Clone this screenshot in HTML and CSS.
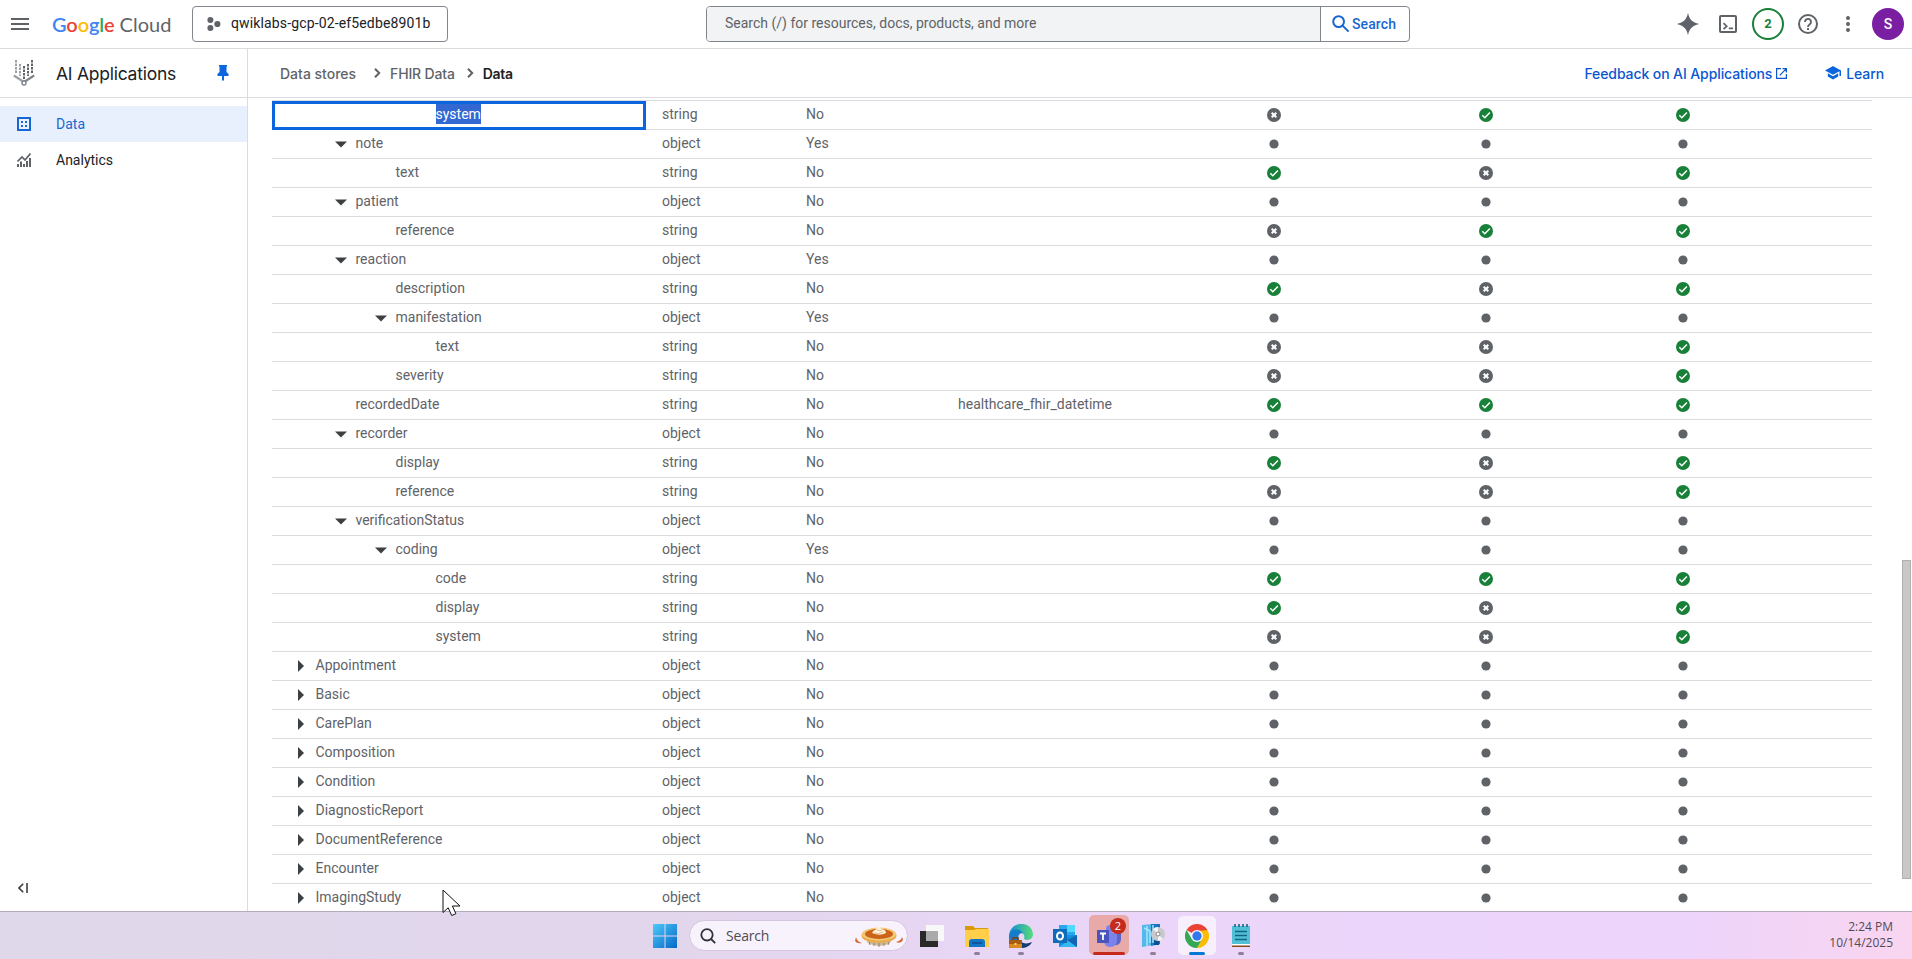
FILE: index.html
```html
<!DOCTYPE html>
<html lang="en">
<head>
<meta charset="utf-8">
<title>AI Applications – Data</title>
<link rel="stylesheet" href="styles.css">
</head>
<body>
<svg class="defs" width="0" height="0">
  <symbol id="yes" viewBox="0 0 14 14"><circle cx="7" cy="7" r="7" fill="#188038"/><path d="M3.3 7.2 5.8 9.7 10.9 4.5" fill="none" stroke="#fff" stroke-width="1.5"/></symbol>
  <symbol id="no" viewBox="0 0 14 14"><circle cx="7" cy="7" r="7" fill="#5f6368"/><path d="M4.7 4.7 9.3 9.3M9.3 4.7 4.7 9.3" fill="none" stroke="#fff" stroke-width="2"/></symbol>
  <symbol id="dot" viewBox="0 0 14 14"><circle cx="7" cy="7" r="4.6" fill="#5f6368"/></symbol>
  <symbol id="open" viewBox="0 0 12 12"><path d="M0 3.500h12L6 9.500z" fill="#3c4043"/></symbol>
  <symbol id="shut" viewBox="0 0 12 12"><path d="M3 0v12L9 6z" fill="#3c4043"/></symbol>
</svg>
<header class="topbar">
  <svg class="menu" width="18" height="12" viewBox="0 0 18 12"><path d="M0 1h18M0 6h18M0 11h18" stroke="#5f6368" stroke-width="2"/></svg>
  <div class="logo"><span class="google"><i class="b">G</i><i class="r">o</i><i class="y">o</i><i class="b">g</i><i class="g">l</i><i class="r">e</i></span><span class="cloud">Cloud</span></div>
  <div class="project">
    <svg width="14" height="14" viewBox="0 0 14 14" fill="#5f6368"><circle cx="3.4" cy="3" r="3"/><circle cx="3.4" cy="11" r="3"/><circle cx="10.4" cy="7" r="3.1"/></svg>
    <span>qwiklabs-gcp-02-ef5edbe8901b</span>
  </div>
  <div class="search">
    <span class="field">Search (/) for resources, docs, products, and more</span>
    <span class="go"><svg width="18" height="18" viewBox="0 0 18 18" fill="none" stroke="#1967d2" stroke-width="2"><circle cx="6.6" cy="6.6" r="5.4"/><path d="m10.6 10.6 6 6"/></svg>Search</span>
  </div>
  <div class="tools">
    <svg width="22" height="22" viewBox="0 0 22 22"><path d="M11 0C12.500 6.500 15.500 9.500 22 11C15.500 12.500 12.500 15.500 11 22C9.500 15.500 6.500 12.500 0 11C6.500 9.500 9.500 6.500 11 0z" fill="#5f6368"/></svg>
    <svg width="18" height="18" viewBox="0 0 18 18" fill="none" stroke="#5f6368" stroke-width="2"><rect x="1" y="1" width="16" height="16" rx="1"/><path d="M4.5 8.2 7.7 11.2 4.5 14.2M9.8 13.4H14" stroke-width="1.7"/></svg>
    <span class="count">2</span>
    <svg width="20" height="20" viewBox="0 0 20 20" fill="none" stroke="#5f6368" stroke-width="2"><circle cx="10" cy="10" r="9"/><path d="M7 8a3 3 0 1 1 4.8 2.3C10.6 11.2 10 11.700 10 13M10 14v2" stroke-width="1.9"/></svg>
    <svg width="4" height="16" viewBox="0 0 4 16" fill="#5f6368"><circle cx="2" cy="2" r="2"/><circle cx="2" cy="8" r="2"/><circle cx="2" cy="14" r="2"/></svg>
    <span class="avatar">S</span>
  </div>
</header>
<div class="body">
  <aside class="side">
    <div class="product">
      <svg width="22" height="26" viewBox="0 0 22 26" fill="none"><path d="M3 0v14M7 4v12" stroke="#9aa0a6" stroke-width="2" stroke-dasharray="2.5 1"/><path d="M11 6v13M15 4v12M19 0v14" stroke="#5f6368" stroke-width="2" stroke-dasharray="2.5 1"/><path d="M.8 15.500 11 22" stroke="#9aa0a6" stroke-width="2.2"/><path d="M21.200 15.500 11 22" stroke="#80868b" stroke-width="2.200"/><circle cx="11" cy="23" r="2" fill="#fff" stroke="#80868b" stroke-width="1.400"/></svg>
      <h1>AI Applications</h1>
      <svg class="pin" width="12" height="16" viewBox="0 0 12 16"><path d="M2 0h8v1.500H9.500V7L11.500 9v2H7v4l-1 1-1-1v-4H.5V9l2-2V1.500H2z" fill="#0b65dd"/></svg>
    </div>
    <nav>
      <a class="item on"><svg width="14" height="14" viewBox="0 0 14 14"><path d="M1 1h12v12H1z" fill="none" stroke="#1967d2" stroke-width="2"/><path d="M4 4h2v2H4zM8 4h2v2H8zM4 8h2v2H4zM8 8h2v2H8z" fill="#1967d2"/></svg><span>Data</span></a>
      <a class="item"><svg width="14" height="14" viewBox="0 0 14 14" fill="none" stroke="#5f6368"><path d="M1 14v-3M4 14V8.500M7 14v-3M10 14V8M13 14V5" stroke-width="2"/><path d="M.5 8.500 5 4l3 3 5.500-6.500" stroke-width="1.700"/></svg><span>Analytics</span></a>
    </nav>
    <svg class="fold" width="10" height="10" viewBox="0 0 10 10" fill="none" stroke="#3c4043" stroke-width="1.600"><path d="M5.200.8 1 5l4.200 4.200M9 0v10"/></svg>
  </aside>
  <main>
    <div class="crumbs">
      <span class="c1">Data stores</span>
      <svg width="7" height="10" viewBox="0 0 7 10"><path d="m1 .8 4.200 4.200L1 9.200" fill="none" stroke="#5f6368" stroke-width="2"/></svg>
      <span class="c2">FHIR Data</span>
      <svg width="7" height="10" viewBox="0 0 7 10"><path d="m1 .8 4.200 4.200L1 9.200" fill="none" stroke="#5f6368" stroke-width="2"/></svg>
      <b>Data</b>
      <a class="feedback"><span>Feedback on AI Applications</span><svg width="11" height="11" viewBox="0 0 11 11" fill="none" stroke="#0b57d0" stroke-width="1.200"><path d="M5 .6H.6v9.800h9.800V6M6.500.6h3.900v3.900M10.400.6 3.700 7.300"/></svg></a>
      <a class="learn"><svg width="16" height="14" viewBox="0 0 16 14" fill="#0b65dd"><path d="M8 0 0 4.400l8 4.400 6.500-3.600V10H16V4.400zM2.800 7.300v3.100L8 13.400l5.200-3V7.300L8 10.200z"/></svg><span>Learn</span></a>
    </div>
    <div class="grid" id="grid"></div>
    <div class="scroll"></div>
  </main>
</div>
<footer class="taskbar">
  <div class="apps">
    <svg class="win" width="24" height="24" viewBox="0 0 24 24"><defs><linearGradient id="w" x1="0" y1="0" x2="1" y2="1"><stop offset="0" stop-color="#4cc9fb"/><stop offset="1" stop-color="#0568c5"/></linearGradient></defs><path d="M0 0h11.500v11.500H0zM12.500 0H24v11.500H12.500zM0 12.500h11.500V24H0zM12.500 12.500H24V24H12.500z" fill="url(#w)"/></svg>
    <div class="find">
      <svg width="16" height="16" viewBox="0 0 16 16" fill="none" stroke="#30303a" stroke-width="1.800"><circle cx="7" cy="6.800" r="5.700"/><path d="m11 11 4.200 4.200"/></svg>
      <span>Search</span>
      <svg width="48" height="22" viewBox="0 0 48 22"><path d="M1 12q1 5 6 6-5 1-7-2zM47 12q-1 4-6 5 5 2 7-2z" fill="#d9662b"/><path d="M9 11h30l-4 7q-11 6-22 0z" fill="#c9b99a"/><path d="M14 17l1 3M19 18v3M24 18v4M29 18v3M34 17l-1 3" stroke="#8f8370"/><ellipse cx="24" cy="10.500" rx="17.500" ry="7.500" fill="#e9ad4e"/><ellipse cx="24" cy="9" rx="17" ry="6.500" fill="#f3c879"/><ellipse cx="24" cy="9" rx="14" ry="5" fill="#c96418"/><path d="M17 8q1-3 4-3.500Q22 1 24.500 0q-.5 3 2.500 4 4 1 4 4-6 3.500-14 0z" fill="#fff1d8"/><path d="M19 8q5 2 9-1M22 5q3 1 5 0" fill="none" stroke="#e2bd8c"/></svg>
    </div>
    <svg class="a task" width="24" height="22" viewBox="0 0 24 22"><path d="M0 6h18v16H0z" fill="#292929"/><path d="M6 0h18v16H6z" fill="#f8f8f8"/><path d="M6 6h12v10H6z" fill="#aaa"/></svg>
    <div class="app run"><svg width="24" height="24" viewBox="0 0 24 24"><path d="M0 2h8l2 2h13v6H0z" fill="#d99a0b"/><path d="M0 6h9l2-1h13v18H0z" fill="#ffcf4b"/><path d="M4 23v-5q0-3 3-3h10q3 0 3 3v5z" fill="#1475c7"/><path d="M7 19h10" stroke="#0b4f91" stroke-width="1.500"/></svg></div>
    <div class="app run"><svg width="24" height="24" viewBox="0 0 24 24"><defs><linearGradient id="e"><stop offset="0" stop-color="#158bd5"/><stop offset="1" stop-color="#58dc79"/></linearGradient></defs><path d="M0 13C0-4 23-4 24 10c0 6-6 7-9 5 2-6-4-7-6-4-2 4 1 10 7 9-3 4-16 5-16-7z" fill="url(#e)"/><path d="M0 13C1 5 9 3 14 9c-6-1-7 8 2 12-6 5-16 1-16-8z" fill="#147cc8"/><path d="M11 17c3 3 8 3 12 1-2 4-6 6-11 6z" fill="#123e75"/><path d="M0 16h13v8H0z" fill="#d88924"/><path d="M0 16h13v4H0z" fill="#a75b13"/><path d="M5.500 19h2v2h-2z" fill="#ffd36b"/><path d="M4 16v-2h5v2" fill="none" stroke="#7b400c" stroke-width="1.500"/></svg></div>
    <div class="app"><svg width="24" height="24" viewBox="0 0 24 24"><path d="M6 1h16v14H6z" fill="#28a8ea"/><path d="M14 1h8v7h-8z" fill="#50d9ff"/><path d="M6 11 24 11v12H6z" fill="#1490df"/><path d="m6 23 18-12v12z" fill="#35b8f1"/><path d="M14 16 24 23V11z" fill="#1266b4"/><path d="M0 5h14v14H0z" fill="#0f6cbd"/><ellipse cx="7" cy="12" rx="3" ry="3.500" fill="none" stroke="#fff" stroke-width="2"/></svg></div>
    <div class="app teams"><svg width="26" height="24" viewBox="0 0 26 24"><circle cx="14" cy="5" r="4" fill="#7b83eb"/><path d="M18 9h7v7q-1 6-7 5z" fill="#5b64c8"/><path d="M8 9h13v8q-1 6-7 6-5 0-6-5z" fill="#7b83eb"/><path d="M1 6h12v13H1z" fill="#4b53bc"/><path d="M4 9.500h6M7 9.500V16" stroke="#fff" stroke-width="1.800"/></svg><span class="badge">2</span></div>
    <div class="app run"><svg width="24" height="24" viewBox="0 0 24 24"><path d="M1 1 12 0v21L1 23z" fill="#54b9e8"/><path d="M10 0h9v20l-9 2z" fill="#1878be"/><path d="M3 4l6 3v12M6 2v20M12 1v18" stroke="#a9e3fb" fill="none" stroke-width="1.500"/><path d="M13 14h5v7h-5z" fill="#075291"/><circle cx="17" cy="10" r="7" fill="#c7cacc"/><path d="m17 10-5-5a7 7 0 0 1 5-2zM17 10l5 5a7 7 0 0 1-5 2z" fill="#f3f3f3"/><circle cx="17" cy="10" r="2" fill="#fff" stroke="#888"/></svg></div>
    <div class="app chrome"><svg width="24" height="24" viewBox="0 0 24 24"><path d="M12 12 1.600 6A12 12 0 0 1 22.400 6z" fill="#ea4335"/><path d="M12 12V6h10.400A12 12 0 0 1 12 24l5.200-9z" fill="#fbbc04"/><path d="M1.600 6A12 12 0 0 0 12 24l5.200-9L12 12l-5.200 3z" fill="#34a853"/><path d="M1.600 6h20.800L12 7z" fill="#ea4335"/><circle cx="12" cy="12" r="6" fill="#fff"/><circle cx="12" cy="12" r="4.700" fill="#3478ee"/></svg></div>
    <div class="app run"><svg width="20" height="24" viewBox="0 0 20 24"><path d="M1 2h18v19H1z" fill="#50bfd7"/><path d="M1 21h18v2H1z" fill="#8a4618"/><path d="M1 20h18v1.500H1z" fill="#fff"/><path d="M4 7.500h12M4 11.500h12M4 15.500h12" stroke="#12657f" stroke-width="1.400"/><path d="M4 0v3M8 0v3M12 0v3M16 0v3" stroke="#155b77" stroke-width="1.500"/></svg></div>
  </div>
  <div class="clock"><span>2:24 PM</span><span>10/14/2025</span></div>
</footer>
<svg class="pointer" width="20" height="30" viewBox="0 0 20 30"><path d="M1 1v22.500l5.200-4.700 3.500 7.700 4.200-1.800-3.500-7.700H18z" fill="#fff" stroke="#111" stroke-width="1"/></svg>
<script src="table.js"></script>
</body>
</html>
```
FILE: styles.css
```css
* { box-sizing: border-box; }
body { margin: 0; width: 1912px; height: 959px; overflow: hidden; background: #fff; color: #202124; font: 14px Roboto, sans-serif; display: flex; flex-direction: column; }
svg { display: block; flex: none; }
.defs { position: absolute; }
.topbar { height: 49px; flex: none; border-bottom: 1px solid #dadce0; display: flex; align-items: center; }
.menu { margin-left: 11px; }
.logo { margin-left: 23px; width: 140px; display: flex; gap: 5px; font: 20px/24px Lato, sans-serif; white-space: nowrap; }
.logo i { font-style: normal; }
.google { font-weight: 600; letter-spacing: -.1px; }
.cloud { color: #5f6368; }
.b { color: #4285f4; } .r { color: #ea4335; } .y { color: #fbbc04; } .g { color: #34a853; }
.project { width: 256px; height: 36px; border: 1px solid #80868b; border-radius: 4px; display: flex; align-items: center; gap: 10px; padding-left: 14px; white-space: nowrap; letter-spacing: .14px; }
.project span { padding-bottom: 2px; }
.search { margin-left: 258px; width: 704px; height: 36px; border: 1px solid #80868b; border-radius: 4px; display: flex; overflow: hidden; }
.field { flex: 1; background: #f1f3f4; color: #5f6368; padding-left: 18px; line-height: 32px; }
.go { width: 89px; border-left: 1px solid #80868b; display: flex; align-items: center; gap: 2px; padding-left: 11px; color: #1967d2; font-weight: 500; letter-spacing: .1px; }
.tools { margin-left: auto; margin-right: 8px; display: flex; align-items: center; }
.tools svg:nth-child(2) { margin-left: 20px; }
.count { margin-left: 15px; width: 32px; height: 32px; border: 2px solid #188038; border-radius: 50%; color: #188038; font-weight: 700; font-size: 13px; line-height: 28px; text-align: center; }
.tools svg:nth-child(4) { margin-left: 14px; }
.tools svg:nth-child(5) { margin-left: 28px; }
.avatar { margin-left: 22px; width: 32px; height: 32px; border-radius: 50%; background: #7b1fa2; color: #fff; font-weight: 500; line-height: 32px; text-align: center; }
.body { flex: 1; min-height: 0; display: flex; }
.side { width: 248px; flex: none; border-right: 1px solid #dadce0; display: flex; flex-direction: column; }
.product { height: 49px; border-bottom: 1px solid #dadce0; display: flex; align-items: center; padding: 0 18px 0 13px; }
.product h1 { margin: 0 0 0 21px; font: 17.500px Inter, sans-serif; letter-spacing: -.25px; white-space: nowrap; }
.pin { margin-left: auto; }
nav { padding-top: 8px; }
.item { height: 36px; display: flex; align-items: center; gap: 25px; padding-left: 17px; }
.item span { padding-bottom: 1px; }
.item.on { background: #e8f0fe; color: #1967d2; }
.fold { margin: auto 0 18px 18px; }
main { flex: 1; display: flex; flex-direction: column; position: relative; overflow: hidden; }
.crumbs { height: 49px; flex: none; border-bottom: 1px solid #dadce0; display: flex; align-items: center; padding: 0 28px 0 32px; font: 500 14px Inter, sans-serif; color: #5f6368; white-space: nowrap; }
.crumbs > svg { margin: 0 9px 0 18px; }
.c2 { letter-spacing: -.17px; }
.crumbs > .c2 + svg { margin: 0 9px 0 12px; }
.crumbs b { color: #202124; font-weight: 600; letter-spacing: -.3px; }
.crumbs a { display: flex; align-items: center; color: #0b57d0; }
.feedback { margin-left: auto; gap: 4px; letter-spacing: -.1px; }
.learn { margin-left: 38px; gap: 5px; letter-spacing: -.1px; }
.grid { margin: 2px 40px 0 24px; border-top: 1px solid #dadce0; flex: none; color: #5f6368; }
.row { height: 29px; border-bottom: 1px solid #dadce0; display: grid; grid-template-columns: 374px 144px 152px 226px 212px 212px 182px; line-height: 26px; }
.row > span { padding-left: 16px; white-space: nowrap; }
.row .name { display: flex; gap: 9px; padding-left: 22.500px; }
.row .name svg { margin-top: 8px; }
.row .state { padding: 7px 0 0; display: flex; justify-content: center; }
.lvl1 { margin-left: 40px; } .lvl2 { margin-left: 80px; } .lvl3 { margin-left: 120px; }
.focus { outline: 3px solid #0b65dd; outline-offset: -3px; height: 29px; }
.focus .label { background: #3367d1; color: #fff; height: 20px; line-height: 20px; margin-top: 3px; }
.scroll { position: absolute; right: 1px; top: 511px; width: 9px; height: 319px; background: #c8c8c8; border: 1px solid #b0b0b0; }
.taskbar { height: 48px; flex: none; border-top: 1px solid #b5aabd; background: linear-gradient(90deg, #dfd7ea 0, #e2d6ec 35%, #ebd6f9 60%, #edd4fb 88%, #f9d5f0 100%); display: flex; align-items: center; color: #514b57; font-family: "Open Sans", sans-serif; }
.apps { display: flex; align-items: center; margin-left: 653px; height: 47px; }
.find { margin-left: 12px; width: 219px; height: 31px; border-radius: 16px; background: #f7f2fb; border: 1px solid #d4c7df; display: flex; align-items: center; padding: 0 4px 0 10px; }
.find span { margin-left: 10px; flex: 1; letter-spacing: -.2px; }
.task { margin-left: 12px; }
.app { width: 44px; height: 47px; display: flex; align-items: center; justify-content: center; position: relative; }
.task + .app { margin-left: 11px; }
.run::after { content: ""; position: absolute; bottom: 4px; left: 19px; width: 6px; height: 3px; border-radius: 2px; background: #8d8097; }
.teams::before, .chrome::before { content: ""; position: absolute; inset: 3px 2px 4px; border-radius: 5px; background: #e8aaa9; }
.chrome::before { background: #f7effc; inset: 4px 3px; }
.app svg { position: relative; }
.teams::after, .chrome::after { content: ""; position: absolute; bottom: 4px; left: 6px; width: 32px; height: 3px; border-radius: 2px; background: #c42b1c; }
.chrome::after { left: 14px; width: 16px; background: #0078d4; }
.badge { position: absolute; left: 23px; top: 6px; width: 16px; height: 16px; border-radius: 50%; background: #c42b1c; color: #fff; font-size: 11px; line-height: 16px; text-align: center; }
.clock { margin-left: auto; margin-right: 19px; display: flex; flex-direction: column; text-align: right; font-size: 12px; line-height: 16px; padding-bottom: 2px; }
.pointer { position: absolute; left: 442px; top: 889px; }
```
FILE: table.js
```js
// indent level, name, type, repeated, state flags (y = yes, n = no, . = not applicable), mapping
const rows = [
  [3, 'system', 'string', 'No', 'nyy'],
  [1, 'note', 'object', 'Yes', '...'],
  [2, 'text', 'string', 'No', 'yny'],
  [1, 'patient', 'object', 'No', '...'],
  [2, 'reference', 'string', 'No', 'nyy'],
  [1, 'reaction', 'object', 'Yes', '...'],
  [2, 'description', 'string', 'No', 'yny'],
  [2, 'manifestation', 'object', 'Yes', '...'],
  [3, 'text', 'string', 'No', 'nny'],
  [2, 'severity', 'string', 'No', 'nny'],
  [1, 'recordedDate', 'string', 'No', 'yyy', 'healthcare_fhir_datetime'],
  [1, 'recorder', 'object', 'No', '...'],
  [2, 'display', 'string', 'No', 'yny'],
  [2, 'reference', 'string', 'No', 'nny'],
  [1, 'verificationStatus', 'object', 'No', '...'],
  [2, 'coding', 'object', 'Yes', '...'],
  [3, 'code', 'string', 'No', 'yyy'],
  [3, 'display', 'string', 'No', 'yny'],
  [3, 'system', 'string', 'No', 'nny'],
  ...['Appointment', 'Basic', 'CarePlan', 'Composition', 'Condition', 'DiagnosticReport',
    'DocumentReference', 'Encounter', 'ImagingStudy'].map(n => [0, n, 'object', 'No', '...'])
];
const icon = (id, size) => `<svg width="${size}" height="${size}"><use href="#${id}"/></svg>`;
const blank = '<svg width="12" height="12"></svg>';
document.getElementById('grid').innerHTML = rows.map(([lvl, name, type, rep, flags, map = ''], i) => {
  const arrow = type === 'object' ? icon(lvl ? 'open' : 'shut', 12) : blank;
  const states = [...flags].map(f => `<span class="state">${icon({ y: 'yes', n: 'no', '.': 'dot' }[f], 14)}</span>`).join('');
  return `<div class="row"><span class="name${i ? '' : ' focus'}"><span class="lvl${lvl}">${arrow}</span><span class="label">${name}</span></span>` +
    `<span>${type}</span><span>${rep}</span><span>${map}</span>${states}</div>`;
}).join('');
```
